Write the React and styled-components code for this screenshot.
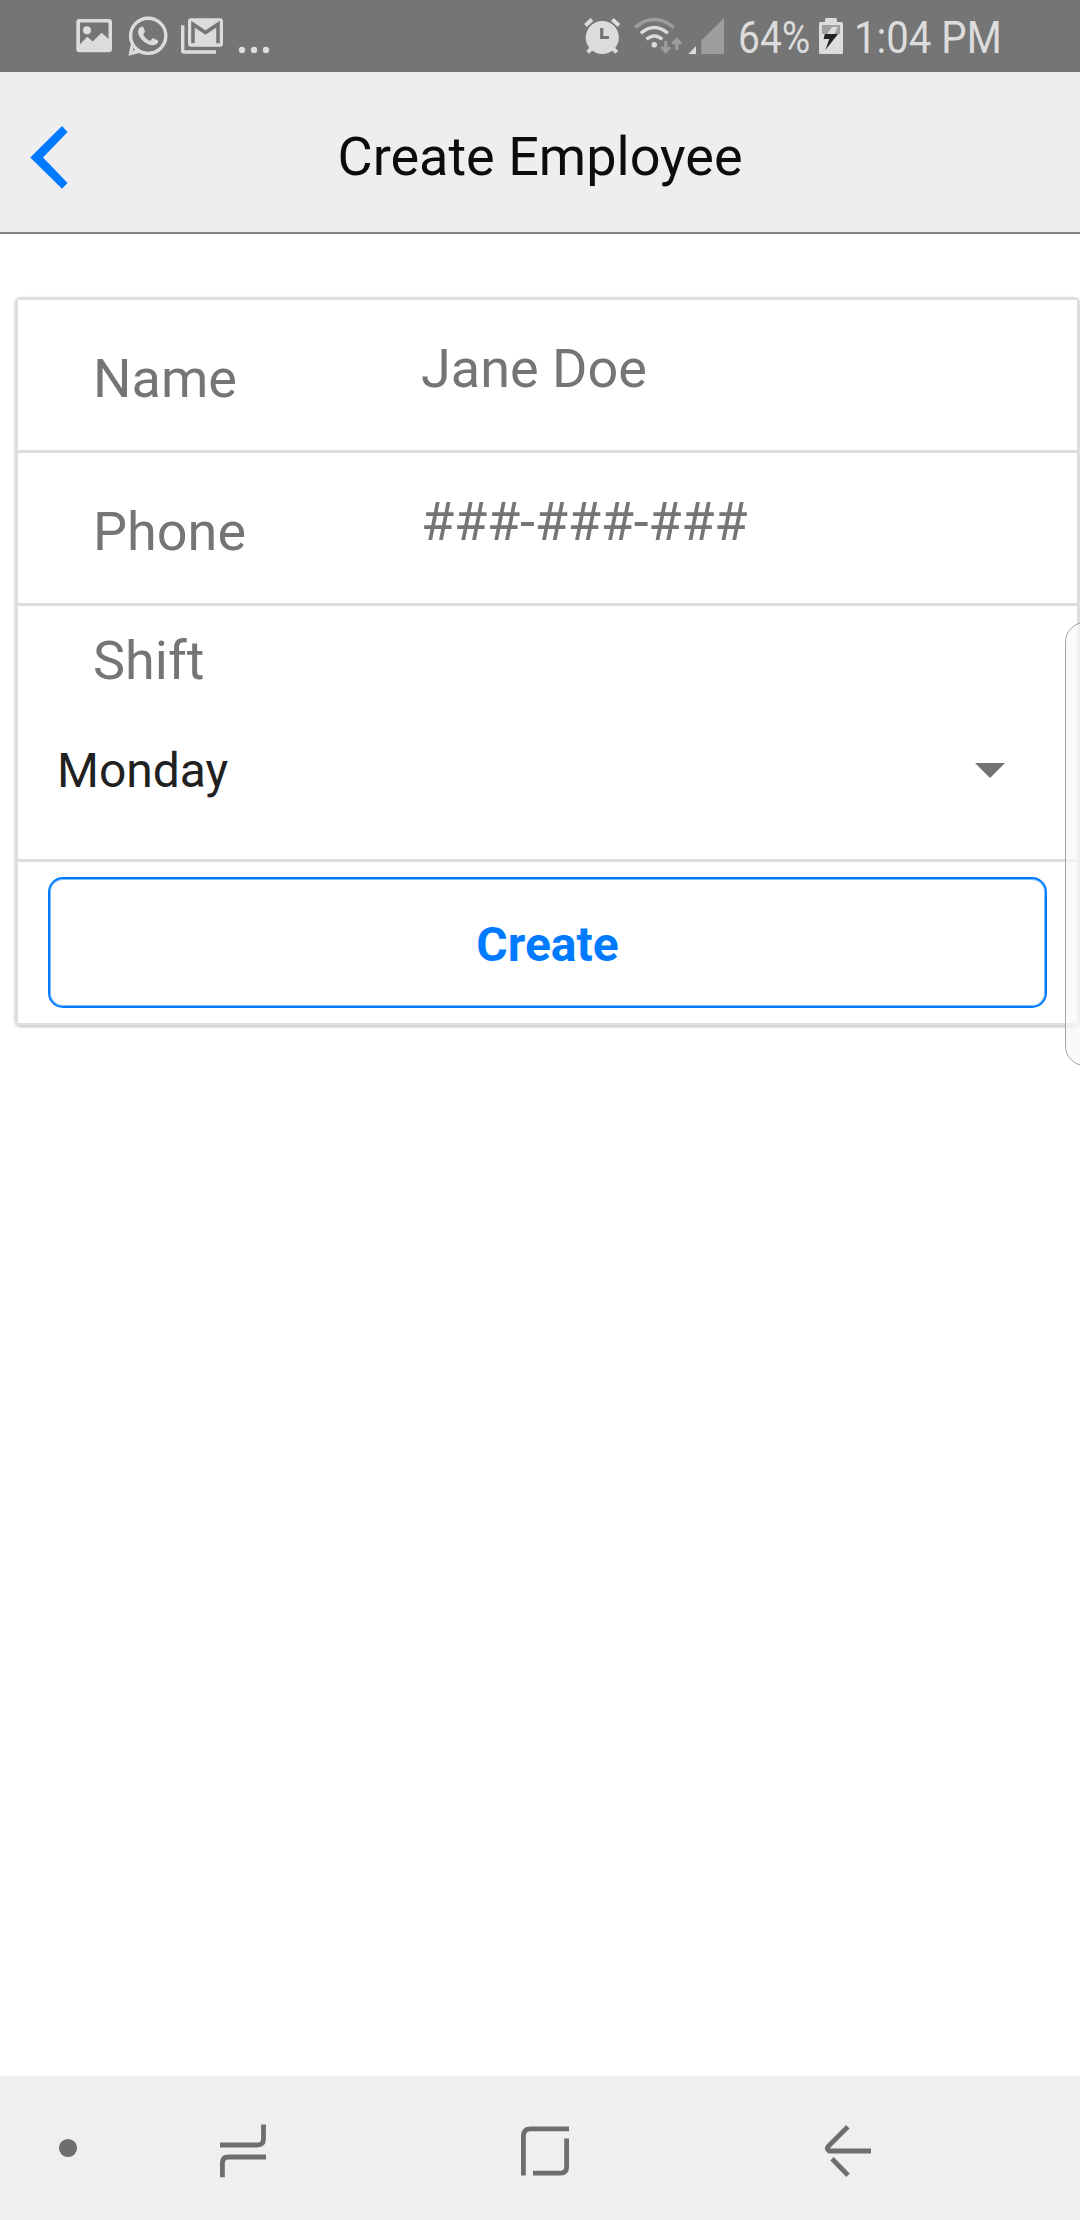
import React from 'react';
import styled, { createGlobalStyle } from 'styled-components';

const GlobalStyle = createGlobalStyle`
  *, *::before, *::after { box-sizing: border-box; }
  body { margin: 0; background: #fff; }
`;

const Screen = styled.div`
  position: relative;
  display: flex;
  flex-direction: column;
  width: 1080px;
  height: 2220px;
  overflow: hidden;
  background: #fff;
  font-family: Roboto, 'Liberation Sans', sans-serif;
`;

const StatusBar = styled.div`
  display: flex;
  flex: none;
  justify-content: space-between;
  height: 72px;
  padding: 0 80px 0 76px;
  background: #757575;
`;

const StatusGroup = styled.div`
  display: flex;
`;

const Icon = styled.svg`
  display: block;
  flex: none;
`;

const StatusSlot = styled.div`
  flex: none;
  width: ${({ $width }) => $width}px;
  height: 72px;
  padding-left: ${({ $inset = 0 }) => $inset}px;
`;

const StatusText = styled.span`
  display: block;
  width: max-content;
  color: #dcdcdc;
  font-size: 44px;
  line-height: 76px;
  white-space: pre;
  transform: scaleX(${({ $stretch }) => $stretch});
  transform-origin: left;
`;

const Header = styled.header`
  display: grid;
  grid-template-columns: 120px 1fr 120px;
  align-items: center;
  flex: none;
  height: 162px;
  border-bottom: 2px solid #828287;
  background: #eeeef0;
`;

const BackButton = styled.button`
  display: flex;
  padding: 10px 0 0 30px;
  border: 0;
  background: none;
`;

const Title = styled.h1`
  margin: 0;
  padding-top: 9px;
  color: #0c0c0c;
  font-size: 54px;
  font-weight: 400;
  line-height: 64px;
  text-align: center;
`;

const Content = styled.main`
  flex: 1;
  padding: 63px 0 0 15px;
`;

const Card = styled.form`
  margin: 0;
  border: 3px solid #ddd;
  border-radius: 6px;
  box-shadow: 0 1px 3px rgba(0, 0, 0, 0.28);
`;

const Section = styled.div`
  display: flex;
  flex-direction: ${({ $column }) => ($column ? 'column' : 'row')};
  align-items: ${({ $column }) => ($column ? 'stretch' : 'center')};
  height: ${({ $height }) => $height}px;
  padding: ${({ $column }) => ($column ? '23px 15px 0' : '0 15px')};
  border-bottom: ${({ $last }) => ($last ? '0' : '3px solid #ddd')};
  background: #fff;
`;

const Label = styled.label`
  flex: none;
  width: 328px;
  padding: ${({ $flush }) => ($flush ? '0' : '7px')} 0 0 60px;
  color: #757575;
  font-size: 54px;
  line-height: 64px;
`;

const Field = styled.input`
  flex: 1;
  min-width: 0;
  height: 77px;
  padding: 0 0 13px;
  margin: 0 0 0 60px;
  border: 0;
  outline: 0;
  background: none;
  color: #757575;
  font: 54px / 64px Roboto, 'Liberation Sans', sans-serif;
  letter-spacing: ${({ type }) => (type === 'tel' ? '-0.25px' : 'normal')};
  &::placeholder { color: #757575; opacity: 1; }
`;

const Picker = styled.div`
  display: flex;
  align-items: center;
  justify-content: space-between;
  height: 64px;
  margin-top: 46px;
  padding: 0 57px 0 24px;
  color: #212121;
  font-size: 48px;
  line-height: 64px;
`;

const Caret = styled.span`
  width: 0;
  height: 0;
  margin-bottom: 2px;
  border: 15px solid transparent;
  border-top-color: #737373;
  border-bottom-width: 0;
`;

const CreateButton = styled.button`
  flex: 1;
  height: 131px;
  margin: 0 15px;
  padding: 5px 0 0;
  border: 2px solid #007aff;
  border-radius: 15px;
  box-shadow: inset 0 0 0 1px #7fbcff;
  background: #fff;
  color: #007aff;
  font: 700 48px / 60px Roboto, 'Liberation Sans', sans-serif;
`;

const EdgeHandle = styled.div`
  position: absolute;
  top: 622px;
  right: -29px;
  width: 44px;
  height: 444px;
  border: 1px solid #a4a4a4;
  border-radius: 20px;
  background: rgba(248, 248, 248, 0.7);
`;

const NavBar = styled.nav`
  display: flex;
  flex: none;
  height: 144px;
  background: #efefef;
`;

const NavSlot = styled.div`
  width: ${({ $width }) => $width}px;
  height: 144px;
`;

function Notifications() {
  return (
    <Icon width="194" height="72" viewBox="76 0 194 72" fill="#dcdcdc">
      <path fillRule="evenodd" d="M79.3 19H108.7Q112 19 112 22V49.3Q112 52.3 108.7 52.3H79.3Q76.3 52.3 76.3 49.3V22Q76.3 19 79.3 19ZM80 22.5V44.3L87.3 36.7L92.7 41.5L101.7 32.7L108.5 39V22.5Z" />
      <circle cx="87" cy="30.2" r="4" />
      <circle cx="148.2" cy="35.8" r="17.6" fill="none" stroke="#dcdcdc" strokeWidth="3.4" />
      <path d="M131.2 42.5L128.4 55.8L141.5 52.5L137.5 49L132.8 50.8L134.4 45Z" />
      <path d="M141.2 26.8C139.2 27.5 138 29.6 138 32C138.4 38.5 146.5 45 153 45.3C156.5 45 158.5 43 158 40.6L152.8 38L150.2 41C147.5 40.2 144.4 37.2 143.2 34.3L145.1 31.8L143.4 27.3C142.8 26.5 142 26.5 141.2 26.8Z" />
      <path d="M181 25.3H184.4V50.3H216V53.8H184Q181 53.8 181 50.8Z" />
      <rect x="188" y="18.3" width="35" height="28.4" rx="3" />
      <path d="M193 43.3V24.2L205.5 32.6L218 24.2V43.3" fill="none" stroke="#757575" strokeWidth="3.6" />
      <circle cx="242" cy="50" r="3.2" />
      <circle cx="254" cy="50" r="3.2" />
      <circle cx="266" cy="50" r="3.2" />
    </Icon>
  );
}

function Connectivity() {
  return (
    <Icon width="155" height="72" viewBox="583 0 155 72" fill="none" stroke="#dcdcdc">
      <circle cx="602.3" cy="37.5" r="16.6" fill="#dcdcdc" stroke="none" />
      <path d="M585.4 25.6L592 19.6M612.4 19.6L619 25.6M592.5 47.5L587.7 52.4M612 47.5L616.8 52.4" strokeWidth="4" />
      <path d="M601.7 28V37.5H609" stroke="#757575" strokeWidth="3.2" />
      <path d="M635 27.3Q654.3 11.8 673.8 27.3" stroke="#9d9d9d" strokeWidth="3.4" />
      <path d="M640.8 33.2Q654.3 22 667.9 33.2M646.4 39.3Q654.3 32.6 662.3 39.3" strokeWidth="3.4" />
      <circle cx="654.3" cy="44.7" r="2.8" fill="#dcdcdc" stroke="none" />
      <path d="M665.7 41V51M661.4 47L665.7 51.5L670 47M676.8 50V40M672.5 44L676.8 39.5L681.1 44" stroke="#9d9d9d" strokeWidth="3.2" />
      <path d="M688.3 54L696 46V54Z" fill="#dcdcdc" stroke="none" />
      <path d="M701.3 54V40.5L724 18V54Z" fill="#9d9d9d" stroke="none" />
    </Icon>
  );
}

function Battery() {
  return (
    <Icon width="24" height="72" viewBox="819 0 24 72">
      <path d="M825 22V19.5Q825 18 826.5 18H835.5Q837 18 837 19.5V22H841.5Q843 22 843 23.5V52.5Q843 54 841.5 54H820.5Q819 54 819 52.5V23.5Q819 22 820.5 22Z" fill="#dcdcdc" />
      <path d="M822 25H840V34H822Z" fill="#a0a0a0" />
      <path d="M827.3 34L832 27H837.7L834.5 34Z" fill="#dcdcdc" />
      <path d="M824.8 34H838L825.4 50L829.3 39H823.6Z" fill="#222" />
    </Icon>
  );
}

const FIELDS = [
  { id: 'name', label: 'Name', placeholder: 'Jane Doe', type: 'text' },
  { id: 'phone', label: 'Phone', placeholder: '###-###-###', type: 'tel' },
];

export default function App() {
  return (
    <>
      <GlobalStyle />
      <Screen>
        <StatusBar>
          <Notifications />
          <StatusGroup>
            <Connectivity />
            <StatusSlot $width={81}>
              <StatusText $stretch={0.885}>64%</StatusText>
            </StatusSlot>
            <Battery />
            <StatusSlot $width={157} $inset={11}>
              <StatusText $stretch={0.912}>1:04 PM</StatusText>
            </StatusSlot>
          </StatusGroup>
        </StatusBar>
        <Header>
          <BackButton type="button" aria-label="Back">
            <Icon width="38" height="64" viewBox="30 125 38 64">
              <path d="M62 126L67.6 132L43 157.5L67.6 183L62 188.8L30.3 157.5Z" fill="#007aff" />
            </Icon>
          </BackButton>
          <Title>Create Employee</Title>
        </Header>
        <Content>
          <Card>
            {FIELDS.map(({ id, label, placeholder, type }) => (
              <Section key={id} $height={153}>
                <Label htmlFor={id}>{label}</Label>
                <Field id={id} type={type} placeholder={placeholder} />
              </Section>
            ))}
            <Section $height={256} $column>
              <Label as="span" $flush>Shift</Label>
              <Picker>
                Monday
                <Caret />
              </Picker>
            </Section>
            <Section $height={161} $last>
              <CreateButton type="button">Create</CreateButton>
            </Section>
          </Card>
        </Content>
        <NavBar>
          <NavSlot $width={136}>
            <Icon width="136" height="144" viewBox="0 2076 136 144">
              <circle cx="68" cy="2148" r="9.1" fill="#6e6e6e" />
            </Icon>
          </NavSlot>
          <NavSlot $width={264}>
            <Icon width="264" height="144" viewBox="136 2076 264 144" fill="none" stroke="#6e6e6e" strokeWidth="4.8">
              <path d="M263.5 2124.5V2139Q263.5 2145 257.5 2145H220M222.4 2177.3V2163Q222.4 2157 228.4 2157H266" />
            </Icon>
          </NavSlot>
          <NavSlot $width={300}>
            <Icon width="300" height="144" viewBox="400 2076 300 144" fill="none" stroke="#6e6e6e" strokeWidth="4.8">
              <path d="M523.4 2175.5V2136Q523.4 2128.8 530.6 2128.8H569M566.6 2138.6V2167Q566.6 2173.2 560.4 2173.2H533" />
            </Icon>
          </NavSlot>
          <NavSlot $width={300}>
            <Icon width="300" height="144" viewBox="700 2076 300 144" fill="none" stroke="#6e6e6e" strokeWidth="4.8">
              <path d="M847.8 2126.8L828.3 2146.4Q826 2149 829.2 2151H871M832 2158.8L848 2175.2" />
            </Icon>
          </NavSlot>
        </NavBar>
        <EdgeHandle />
      </Screen>
    </>
  );
}
